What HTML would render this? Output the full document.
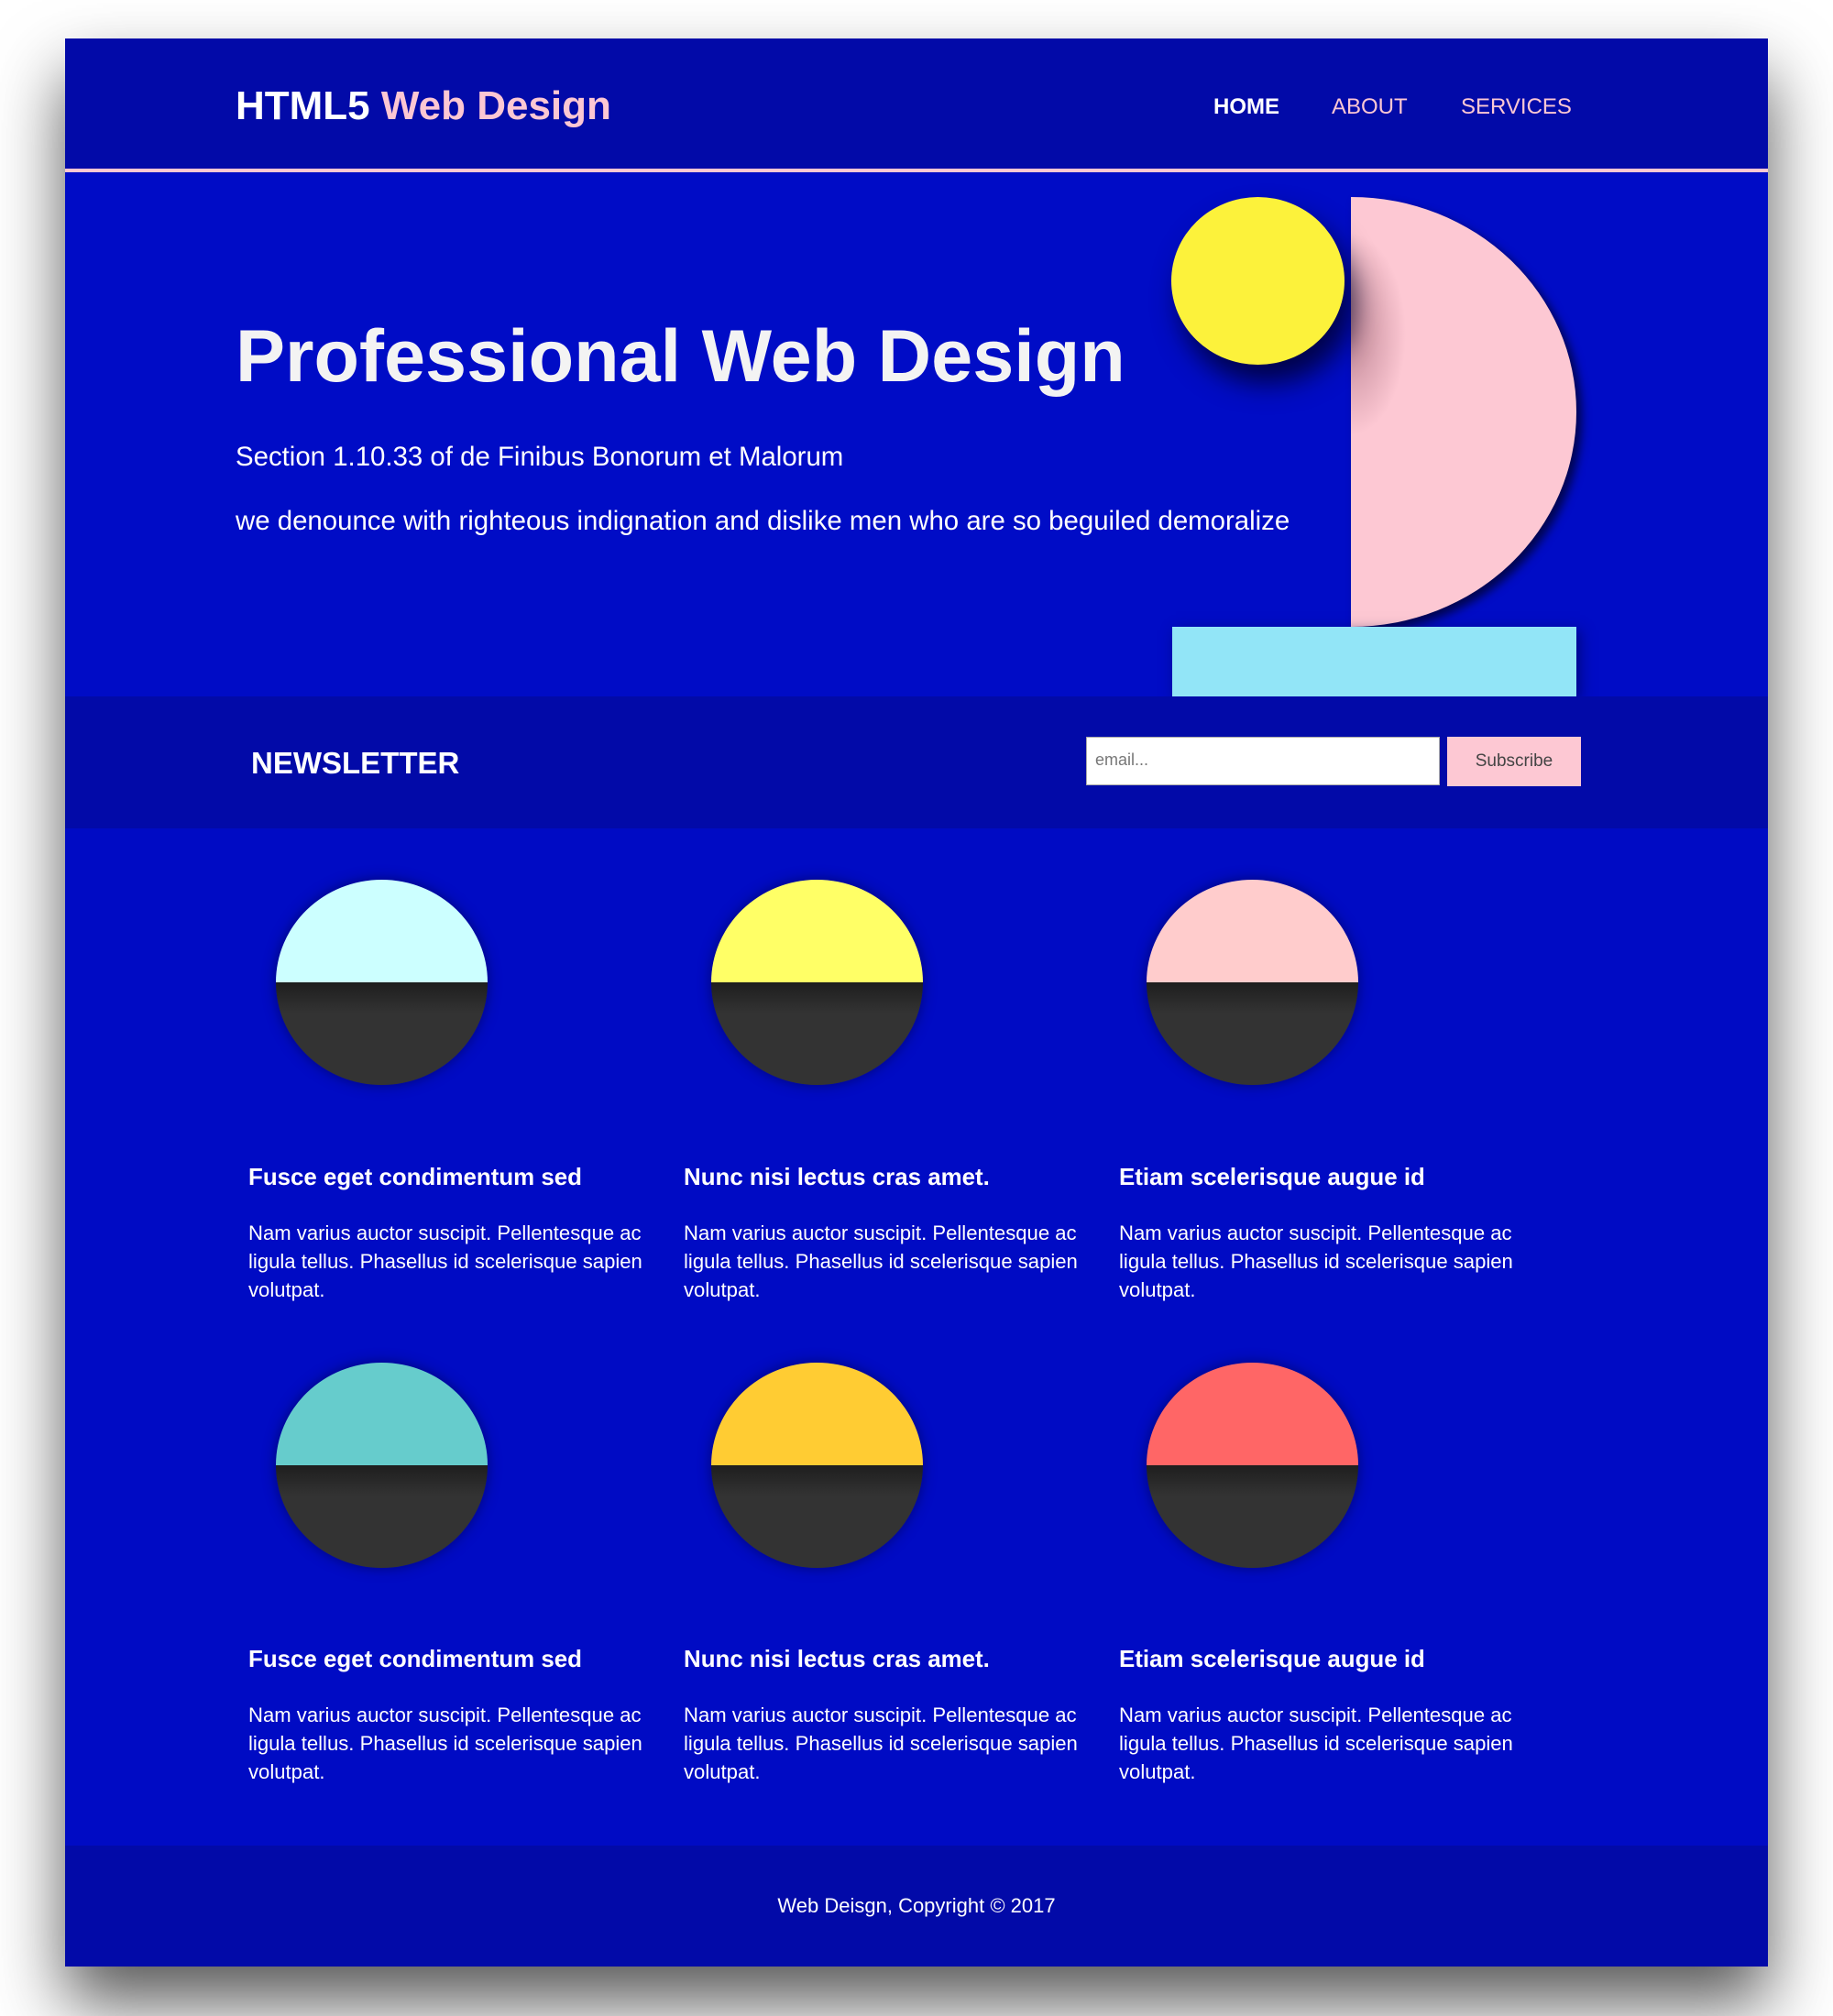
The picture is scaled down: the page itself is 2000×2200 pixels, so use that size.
<!DOCTYPE html>
<html><head><meta charset="utf-8"><style>
*{margin:0;padding:0;box-sizing:border-box}
body{width:2000px;height:2200px;background:#fff;font-family:"Liberation Sans",Arial,sans-serif;position:relative;overflow:hidden}
#page{position:absolute;left:71px;top:42px;width:1858px;height:2104px;background:#000bc4;box-shadow:0 40px 70px rgba(0,0,0,.65)}
.a{position:absolute}
header{position:absolute;left:0;top:0;width:1858px;height:146px;background:#020aa8;border-bottom:4px solid #fcc7d3}
.logo{left:186px;top:49px;font-size:44px;font-weight:bold;color:#fff}
.logo span{color:#fcc7d3}
.nav{top:61px;font-size:24px;color:#fcc7d3}
.hero{left:0;top:146px;width:1858px;height:572px;background:#000cc6}
h1{position:absolute;left:186px;top:155px;font-size:81px;color:#f3f3f3;font-weight:bold;white-space:nowrap}
.p1{left:186px;top:294px;font-size:29.4px;color:#fff;white-space:nowrap}
.p2{left:186px;top:364px;font-size:29.4px;color:#fff;white-space:nowrap}
.news{left:0;top:718px;width:1858px;height:144px;background:#020aa8}
.circ{width:231px;height:224px;border-radius:50%;overflow:hidden;box-shadow:0 0 14px rgba(0,0,40,.5)}
.circ .t{height:50%}
.circ .b{height:50%;background:linear-gradient(#1e1e1e,#333 30%,#333)}
.ct{font-size:25.9px;font-weight:bold;color:#fff;white-space:nowrap}
.cp{font-size:22.1px;line-height:31px;color:#fff;width:460px}
footer{position:absolute;left:0;top:1972px;width:1858px;height:132px;background:#020aa8;color:#fff;font-size:22px;text-align:center;line-height:132px}
</style></head><body>
<div id="page">
<header>
<div class="a logo">HTML5 <span>Web Design</span></div>
<div class="a nav" style="left:1253px;color:#fff;font-weight:bold">HOME</div>
<div class="a nav" style="left:1382px">ABOUT</div>
<div class="a nav" style="left:1523px">SERVICES</div>
</header>
<div class="a hero">
<h1>Professional Web Design</h1>
<div class="a p1">Section 1.10.33 of de Finibus Bonorum et Malorum</div>
<div class="a p2">we denounce with righteous indignation and dislike men who are so beguiled demoralize</div>
<div class="a" style="left:1403px;top:27px;width:246px;height:469px;background:#fdc8d3;border-radius:0 246px 246px 0/0 235px 235px 0;box-shadow:6px 6px 10px rgba(0,0,0,.6)"></div>
<div class="a" style="left:1403px;top:27px;width:60px;height:469px;background:radial-gradient(ellipse 60px 110px at 0 150px,rgba(120,60,80,.45),rgba(0,0,0,0))"></div>
<div class="a" style="left:1207px;top:27px;width:189px;height:183px;border-radius:50%;background:#fcf23b;box-shadow:10px 20px 30px rgba(0,0,40,.8)"></div>
<div class="a" style="left:1208px;top:496px;width:441px;height:76px;background:#92e5f7;box-shadow:4px 4px 14px rgba(0,0,60,.5)"></div>
</div>
<div class="a news">
<div class="a" style="left:203px;top:54px;font-size:33px;font-weight:bold;color:#fff">NEWSLETTER</div>
<div class="a" style="left:1114px;top:44px;width:386px;height:53px;background:#fff;border:1px solid #aaa;font-size:18px;color:#777;padding:14px 9px">email...</div>
<div class="a" style="left:1508px;top:44px;width:146px;height:54px;background:#fdc8d3;font-size:19px;color:#444;text-align:center;line-height:54px">Subscribe</div>
</div>

<div class="a circ" style="left:230px;top:918px"><div class="t" style="background:#ccffff"></div><div class="b"></div></div>
<div class="a circ" style="left:705px;top:918px"><div class="t" style="background:#ffff66"></div><div class="b"></div></div>
<div class="a circ" style="left:1180px;top:918px"><div class="t" style="background:#ffcccc"></div><div class="b"></div></div>
<div class="a ct" style="left:200px;top:1229px">Fusce eget condimentum sed</div>
<div class="a ct" style="left:675px;top:1229px">Nunc nisi lectus cras amet.</div>
<div class="a ct" style="left:1150px;top:1229px">Etiam scelerisque augue id</div>
<div class="a cp" style="left:200px;top:1288px">Nam varius auctor suscipit. Pellentesque ac ligula tellus. Phasellus id scelerisque sapien volutpat.</div>
<div class="a cp" style="left:675px;top:1288px">Nam varius auctor suscipit. Pellentesque ac ligula tellus. Phasellus id scelerisque sapien volutpat.</div>
<div class="a cp" style="left:1150px;top:1288px">Nam varius auctor suscipit. Pellentesque ac ligula tellus. Phasellus id scelerisque sapien volutpat.</div>

<div class="a circ" style="left:230px;top:1445px"><div class="t" style="background:#66cccc"></div><div class="b"></div></div>
<div class="a circ" style="left:705px;top:1445px"><div class="t" style="background:#ffcc33"></div><div class="b"></div></div>
<div class="a circ" style="left:1180px;top:1445px"><div class="t" style="background:#ff6666"></div><div class="b"></div></div>
<div class="a ct" style="left:200px;top:1755px">Fusce eget condimentum sed</div>
<div class="a ct" style="left:675px;top:1755px">Nunc nisi lectus cras amet.</div>
<div class="a ct" style="left:1150px;top:1755px">Etiam scelerisque augue id</div>
<div class="a cp" style="left:200px;top:1814px">Nam varius auctor suscipit. Pellentesque ac ligula tellus. Phasellus id scelerisque sapien volutpat.</div>
<div class="a cp" style="left:675px;top:1814px">Nam varius auctor suscipit. Pellentesque ac ligula tellus. Phasellus id scelerisque sapien volutpat.</div>
<div class="a cp" style="left:1150px;top:1814px">Nam varius auctor suscipit. Pellentesque ac ligula tellus. Phasellus id scelerisque sapien volutpat.</div>

<footer>Web Deisgn, Copyright © 2017</footer>
</div>
</body></html>
